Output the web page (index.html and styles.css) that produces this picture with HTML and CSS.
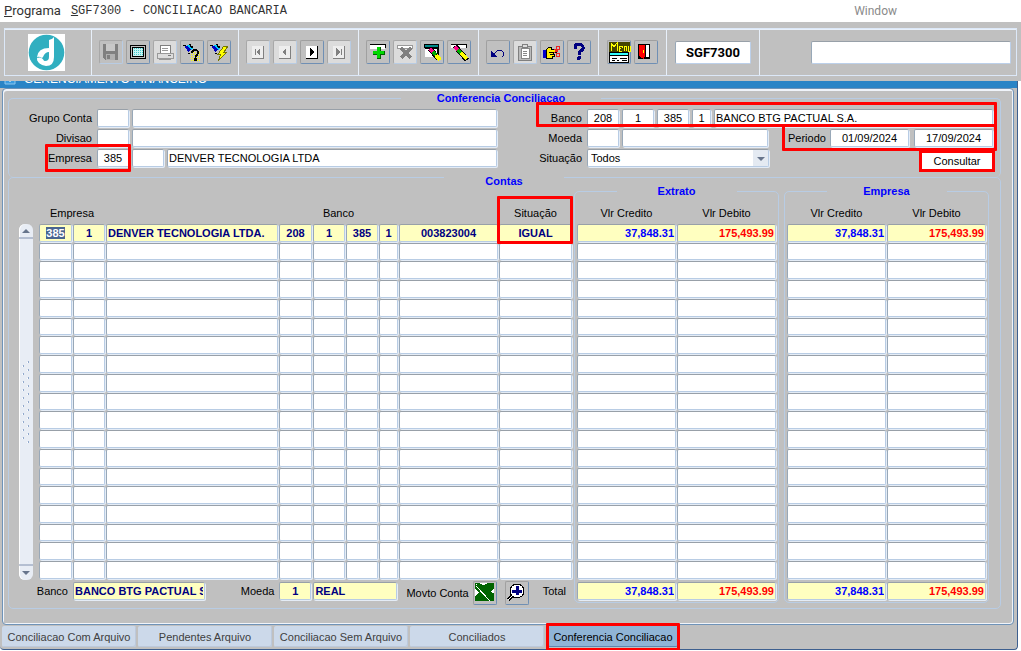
FILE: index.html
```html
<!DOCTYPE html>
<html lang="pt-BR">
<head>
    <meta charset="UTF-8">
    <meta name="viewport" content="width=device-width, initial-scale=1.0">
    <title>SGF7300 - Conciliacao Bancaria</title>
    <link rel="stylesheet" href="styles.css">
</head>
<body>
    <nav class="menubar">
        <a href="#" class="menu-programa"><u>P</u>rograma</a>
        <a href="#" class="menu-titulo"><u>S</u>GF7300 - CONCILIACAO BANCARIA</a>
        <a href="#" class="menu-window">Window</a>
    </nav>

    <header class="toolbar">
        <div class="tools">
            <div class="group group-logo">
                <svg class="logo" viewBox="0 0 37 37">
                    <rect width="37" height="37" fill="#fff"/>
                    <circle cx="18.500" cy="18.500" r="17.800" fill="#31afc0"/>
                    <path d="M21 6Q25 5 26 3V23Q26 32 18 32Q9 31 9 23Q10 14 21 14Z" fill="#fff"/>
                    <path d="M21 18q-4 0-6 5l-1 1q-3-2-5-1l1 3 2-1q3 2 5 2 4 0 4-4z" fill="#31afc0"/>
                    <path d="M9 24q5-2 7 3l-3 3q-4-2-4-6z" fill="#fff"/>
                </svg>
            </div>
            <div class="group">
                <button class="tool off" type="button" aria-label="Salvar">
                    <svg viewBox="0 0 24 24"><path d="M4 4h15v16H6l-2-2z" fill="#808080"/><path d="M7 4h9v7H7z" fill="#c8c8c8"/><path d="M7 14h9v6H7z" fill="#b0b0b0"/><path d="M8 15h3v4H8z" fill="#808080"/></svg>
                </button>
                <button class="tool" type="button" aria-label="Tela">
                    <svg viewBox="0 0 24 24"><path d="M4 5h16v14H4z"/><path d="M5 6h14v12H5z" fill="#c0c0c0"/><path d="M6 7h12v10H6z"/><path d="M7 8h10v8H7z" fill="#c8f4f4"/><path d="M8 8v8m2-8v8m2-8v8m2-8v8m2-8v8" stroke="#4cc" stroke-dasharray="1 1"/></svg>
                </button>
                <button class="tool off pale" type="button" aria-label="Imprimir">
                    <svg viewBox="0 0 24 24"><path d="M7 5h10v8H7z" fill="#fff" stroke="#808080"/><path d="M9 8h6m-6 2h6" stroke="#999"/><path d="M4 13h16v5H4z" fill="#ddd" stroke="#999"/><path d="M6 18h12v2H6z" fill="#999"/><path d="M15 15h3" stroke="#777"/></svg>
                </button>
                <button class="tool" type="button" aria-label="Entrar consulta">
                    <svg viewBox="0 0 24 24"><path d="M11 12.500h10m-10 2h10m-10 2h10m-10 2h10m-10 2h10" stroke="#ff0" stroke-dasharray="1 1"/><path d="M4 5l4 7 5-5z" fill="#0000c0"/><path d="M3 5h3m2 8h2" stroke="#000"/><path d="M7 5h3l3 3-2 2z" fill="#0cf"/><path d="M9 4h2v2h2v2h-2z" fill="#000"/><path d="M12 13q0-3 3-3t3 3q0 2-3 4" fill="none" stroke="#000" stroke-width="2"/><path d="M14 18h3v3h-3z"/></svg>
                </button>
                <button class="tool" type="button" aria-label="Executar consulta">
                    <svg viewBox="0 0 24 24"><path d="M4 5l4 7 5-5z" fill="#0000c0"/><path d="M3 5h3m2 8h2" stroke="#000"/><path d="M7 5h3l3 3-2 2z" fill="#0cf"/><path d="M9 4h2v2h2v2h-2z"/><path d="M17 6h4l-4 6h3l-9 9 3-7h-3z" fill="#ff0" stroke="#770"/></svg>
                </button>
            </div>
            <div class="group">
                <button class="tool off pale" type="button" aria-label="Primeiro">
                    <svg viewBox="0 0 24 24"><path d="M6 6h11v12H6z" fill="#eee"/><path d="M17 6v12H6" fill="none" stroke="#808080"/><path d="M9 9v6" stroke="#808080"/><path d="M14 8v8l-4-4z" fill="#808080"/></svg>
                </button>
                <button class="tool off pale" type="button" aria-label="Anterior">
                    <svg viewBox="0 0 24 24"><path d="M6 6h11v12H6z" fill="#eee"/><path d="M17 6v12H6" fill="none" stroke="#808080"/><path d="M13 8v8l-4-4z" fill="#808080"/></svg>
                </button>
                <button class="tool" type="button" aria-label="Proximo">
                    <svg viewBox="0 0 24 24"><path d="M6 6h11v12H6z" fill="#fff"/><path d="M17 6v12H6" fill="none" stroke="#000"/><path d="M10 8v8l4-4z"/></svg>
                </button>
                <button class="tool off pale" type="button" aria-label="Ultimo">
                    <svg viewBox="0 0 24 24"><path d="M6 6h11v12H6z" fill="#eee"/><path d="M17 6v12H6" fill="none" stroke="#808080"/><path d="M14 9v6" stroke="#808080"/><path d="M9 8v8l4-4z" fill="#808080"/></svg>
                </button>
            </div>
            <div class="group">
                <button class="tool" type="button" aria-label="Inserir">
                    <svg viewBox="0 0 24 24"><path d="M4 5h15v4H4z" fill="#fff"/><path d="M4 4h16v1H4zM19 5h1v3h-1z"/><path d="M11 7h4v4h4v4h-4v4h-4v-4H7v-4h4z" fill="#006000"/><path d="M11 7h3v4h4v3h-4v4h-3v-4H7v-3h4z" fill="#00d800"/></svg>
                </button>
                <button class="tool off pale" type="button" aria-label="Remover">
                    <svg viewBox="0 0 24 24"><path d="M4 5h15v3H4z" fill="#fff" stroke="#999"/><path d="M8 8l10 10m0-10l-10 10" stroke="#808080" stroke-width="4"/></svg>
                </button>
                <button class="tool" type="button" aria-label="Limpar tela">
                    <svg viewBox="0 0 24 24"><path d="M4 4h15v4H4zM5 8h14v9H5z"/><path d="M5 5h13v2H5z" fill="#088"/><path d="M5 9h12v8H5z" fill="#fff"/><path d="M10 9l9 10" stroke="#000" stroke-width="5"/><path d="M10 9l3 3" stroke="#f08" stroke-width="4"/><path d="M13 12l3 3" stroke="#0a0" stroke-width="4"/><path d="M16 15l4 5" stroke="#ff0" stroke-width="4"/></svg>
                </button>
                <button class="tool" type="button" aria-label="Limpar registro">
                    <svg viewBox="0 0 24 24"><path d="M4 5h15v3H4z" fill="#fff"/><path d="M4 4h16v1H4zM19 5h1v3h-1z"/><path d="M8 6l12 14" stroke="#000" stroke-width="5"/><path d="M8 7l4 4" stroke="#f08" stroke-width="3"/><path d="M11 10l3 3" stroke="#0a0" stroke-width="3"/><path d="M14 13l6 6" stroke="#ff0" stroke-width="3"/></svg>
                </button>
            </div>
            <div class="group">
                <button class="tool" type="button" aria-label="Desfazer">
                    <svg viewBox="0 0 24 24"><path d="M7 15l4-4q4-2 6 1t-1 5" fill="none" stroke="#000080"/><path d="M5 11v6h7z" fill="#000080"/></svg>
                </button>
                <button class="tool off pale" type="button" aria-label="Area de transferencia">
                    <svg viewBox="0 0 24 24"><path d="M5 6h13v14H5z" fill="#bbb" stroke="#808080"/><path d="M8 8h8v10H8z" fill="#fff" stroke="#888"/><path d="M9 4h5v3H9z" fill="#ddd" stroke="#808080"/><path d="M10 11h4m-4 2h4m-4 2h4" stroke="#888"/></svg>
                </button>
                <button class="tool" type="button" aria-label="Recortar">
                    <svg viewBox="0 0 24 24"><path d="M3 10h3v8H3z" fill="#00c"/><path d="M6 10l3-3h2v2h5v3h-3v2h1v2h-2v2H6z" fill="#fe0" stroke="#000"/><path d="M9 12h5m-4 2h4" stroke="#000"/><path d="M14 9l4 3m-4 1l4-3" stroke="#e22"/><circle cx="18" cy="8" r="2" fill="none" stroke="#e22"/><circle cx="18" cy="15" r="2" fill="none" stroke="#e22"/></svg>
                </button>
                <button class="tool" type="button" aria-label="Ajuda">
                    <svg viewBox="0 0 24 24"><path d="M8 9V6q1-2 4-2t4 3-4 5v3" fill="none" stroke="#000080" stroke-width="3"/><circle cx="12" cy="18" r="2" fill="#000080"/></svg>
                </button>
            </div>
            <div class="group group-menu">
                <button class="tool" type="button" aria-label="Menu">
                    <svg viewBox="0 0 24 24"><path d="M2 2h21v10H2z" fill="#440"/><path d="M4 11V3l3 4 3-4v8M14 8h-2v3h3M12 8V6h3v2M17 11V6h2v5M21 6v5h2V6" fill="none" stroke="#ff0"/><path d="M2 12h20v11H2z"/><path d="M3 13h18v2H3z" fill="#3ff"/><path d="M3 16h18v6H3z" fill="#fff"/><path d="M5 18h5m3 0h7M5 20h3m2 0h2m3 0h5" stroke="#000"/></svg>
                </button>
                <button class="tool" type="button" aria-label="Sair">
                    <svg viewBox="0 0 24 24"><path d="M4 4h12v15H4z"/><path d="M12 5h3v12h-3z" fill="#fff"/><path d="M5 5h6v11l-1 3-5-3z" fill="#f00"/><path d="M9 10v3" stroke="#ff0"/></svg>
                </button>
            </div>
            <div class="group group-code">
                <input class="code" type="text" value="SGF7300" aria-label="Programa">
            </div>
            <div class="group group-user">
                <input class="code user" type="text" aria-label="Usuario">
            </div>
        </div>
    </header>

    <main class="window">
        <div class="titlebar">
            <svg class="title-icon" viewBox="0 0 12 12"><path d="M1 0h10v11H1z" fill="#3a9be0" stroke="#8cc6ee"/><path d="M3 5h3v4m0-6h3v4" fill="none" stroke="#fff"/></svg>
            <span>GERENCIAMENTO FINANCEIRO</span>
        </div>

        <div class="panel">
            <form>
                <fieldset class="frame filters">
                    <legend>Conferencia Conciliacao</legend>
                    <div class="filter-cols">
                        <div class="filter-col">
                            <div class="line">
                                <label for="grupo">Grupo Conta</label>
                                <input class="field w32" id="grupo" type="text">
                                <input class="field grow" type="text" aria-label="Nome do grupo">
                            </div>
                            <div class="line">
                                <label for="divisao">Divisao</label>
                                <input class="field w32" id="divisao" type="text">
                                <input class="field grow" type="text" aria-label="Nome da divisao">
                            </div>
                            <div class="line">
                                <div class="mark mark-empresa">
                                    <label for="empresa">Empresa</label>
                                    <input class="field w32 center" id="empresa" type="text" value="385">
                                </div>
                                <input class="field w32" type="text" aria-label="Filial">
                                <input class="field grow" type="text" value="DENVER TECNOLOGIA LTDA" aria-label="Nome da empresa">
                            </div>
                        </div>
                        <div class="filter-col filter-right">
                            <div class="line mark mark-banco">
                                <label for="banco">Banco</label>
                                <input class="field w32 center" id="banco" type="text" value="208">
                                <input class="field w32 center" type="text" value="1" aria-label="Filial do banco">
                                <input class="field w32 center" type="text" value="385" aria-label="Agencia">
                                <input class="field w19 center" type="text" value="1" aria-label="Digito">
                                <input class="field grow" type="text" value="BANCO BTG PACTUAL S.A." aria-label="Nome do banco">
                            </div>
                            <div class="line">
                                <label for="moeda">Moeda</label>
                                <input class="field w32" id="moeda" type="text">
                                <input class="field grow" type="text" aria-label="Nome da moeda">
                                <div class="mark mark-periodo">
                                    <label for="periodo">Periodo</label>
                                    <input class="field center" id="periodo" type="text" value="01/09/2024">
                                    <input class="field center" type="text" value="17/09/2024" aria-label="Periodo final">
                                </div>
                            </div>
                            <div class="line">
                                <label for="situacao">Situação</label>
                                <div class="select-wrap">
                                    <select class="field" id="situacao">
                                        <option>Todos</option>
                                    </select>
                                </div>
                                <div class="actions">
                                    <button class="consultar" type="button">Consultar</button>
                                </div>
                            </div>
                        </div>
                    </div>
                </fieldset>

                <fieldset class="frame contas">
                    <legend>Contas</legend>
                    <div class="contas-cols">
                        <div class="scrollbar">
                            <svg class="arrow" viewBox="0 0 14 16"><path d="M3 9l4-4 4 4z" fill="#67758c"/><path d="M0 14h14" stroke="#8090ae"/></svg>
                            <svg class="grip" viewBox="0 0 14 84">
                                <defs>
                                    <pattern id="dots" width="14" height="8" patternUnits="userSpaceOnUse">
                                        <path d="M8 2h1v1H8zM3 6h1v1H3z" fill="#fff"/>
                                        <path d="M9 1h1v1H9zM8 3h1V2h1v1zM4 5h1v1H4zM3 7h1V6h1v1z" fill="#90a8cc"/>
                                    </pattern>
                                </defs>
                                <rect width="14" height="84" fill="url(#dots)"/>
                            </svg>
                            <svg class="arrow" viewBox="0 0 14 16"><path d="M3 7h8l-4 4z" fill="#67758c"/><path d="M0 1h14" stroke="#8090ae"/></svg>
                        </div>

                        <div class="main-col">
                            <table>
                                <colgroup>
                                    <col class="c33"><col class="c32"><col>
                                    <col class="c33"><col class="c32"><col class="c32"><col class="c19">
                                    <col class="c99"><col class="c73">
                                </colgroup>
                                <thead>
                                    <tr>
                                        <th colspan="2">Empresa</th>
                                        <th></th>
                                        <th colspan="4">Banco</th>
                                        <th></th>
                                        <th>Situação</th>
                                    </tr>
                                </thead>
                                <tbody>
                                    <tr class="current">
                                        <td><span class="selected">385</span></td>
                                        <td>1</td>
                                        <td class="left">DENVER TECNOLOGIA LTDA.</td>
                                        <td>208</td>
                                        <td>1</td>
                                        <td>385</td>
                                        <td>1</td>
                                        <td>003823004</td>
                                        <td class="mark mark-situacao">IGUAL</td>
                                    </tr>
                                </tbody>
                            </table>
                            <div class="footer-row">
                                <label for="rod-banco">Banco</label>
                                <input class="field yellow rod-banco" id="rod-banco" type="text" value="BANCO BTG PACTUAL S.A.">
                                <label class="rod-moeda" for="rod-moeda">Moeda</label>
                                <input class="field yellow w32 center" id="rod-moeda" type="text" value="1">
                                <input class="field yellow rod-nome" type="text" value="REAL" aria-label="Nome da moeda">
                                <span class="movto">Movto Conta</span>
                                <button class="tool" type="button" aria-label="Exportar planilha">
                                    <svg viewBox="0 0 24 24"><path d="M2 2h19v18H2z" fill="#006400"/><path d="M7 2h7v1h-2v1H9V3H7zM2 8l4 3-4 4zM21 7l-4 4 4 1zM3 3h1v1H3z" fill="#fff"/><path d="M3 5l14 15" stroke="#fff"/></svg>
                                </button>
                                <button class="tool zoom" type="button" aria-label="Detalhar">
                                    <svg viewBox="0 0 24 24"><circle cx="12" cy="10" r="7" fill="#fff" stroke="#000"/><path d="M12 5v9M7 10h10" stroke="#000080" stroke-width="3"/><path d="M7 15l-4 4" stroke="#000" stroke-width="3"/><path d="M7 15l-4 4" stroke="#fff"/></svg>
                                </button>
                                <span class="total">Total</span>
                            </div>
                        </div>

                        <fieldset class="frame money">
                            <legend>Extrato</legend>
                            <table>
                                <thead>
                                    <tr><th>Vlr Credito</th><th>Vlr Debito</th></tr>
                                </thead>
                                <tbody>
                                    <tr class="current"><td class="credito">37,848.31</td><td class="debito">175,493.99</td></tr>
                                </tbody>
                            </table>
                            <div class="totals">
                                <input class="field yellow credito" type="text" value="37,848.31" aria-label="Total credito extrato">
                                <input class="field yellow debito" type="text" value="175,493.99" aria-label="Total debito extrato">
                            </div>
                        </fieldset>

                        <fieldset class="frame money">
                            <legend>Empresa</legend>
                            <table>
                                <thead>
                                    <tr><th>Vlr Credito</th><th>Vlr Debito</th></tr>
                                </thead>
                                <tbody>
                                    <tr class="current"><td class="credito">37,848.31</td><td class="debito">175,493.99</td></tr>
                                </tbody>
                            </table>
                            <div class="totals">
                                <input class="field yellow credito" type="text" value="37,848.31" aria-label="Total credito empresa">
                                <input class="field yellow debito" type="text" value="175,493.99" aria-label="Total debito empresa">
                            </div>
                        </fieldset>
                    </div>
                </fieldset>
            </form>
        </div>

        <div class="tabs">
            <button type="button">Conciliacao Com Arquivo</button>
            <button type="button">Pendentes Arquivo</button>
            <button type="button">Conciliacao Sem Arquivo</button>
            <button type="button">Conciliados</button>
            <button type="button" class="active mark mark-tab">Conferencia Conciliacao</button>
        </div>
    </main>
    <script src="script.js"></script>
</body>
</html>
```

FILE: styles.css
```css
* {
    box-sizing: border-box;
}

body {
    margin: 0;
    background: #fff;
    font-family: "Liberation Sans", Arial, sans-serif;
    font-size: 11px;
    line-height: 14px;
    color: #000;
}

input, select, button {
    font: inherit;
    color: inherit;
    margin: 0;
}

svg {
    display: block;
}

/* Menu */
.menubar {
    display: flex;
    align-items: center;
    height: 22px;
    padding: 0 124px 0 4px;
    font-size: 12px;
}

.menubar a {
    color: #333;
    text-decoration: none;
}

.menubar .menu-programa {
    font-family: Roboto, sans-serif;
    font-size: 13px;
}

.menubar .menu-titulo {
    margin-left: 10px;
    font-family: "Liberation Mono", monospace;
}

.menubar .menu-window {
    margin-left: auto;
    font-family: Roboto, sans-serif;
    color: #8a8a8a;
}

/* Barra de ferramentas */
.toolbar {
    height: 59px;
    padding: 6px 4px 5px 4px;
    background: #c0c0c0;
}

.tools {
    display: flex;
    height: 48px;
    border: 1px solid #dce8f8;
    box-shadow: inset 0 1px #e8f0fa;
}

.group {
    display: flex;
    align-items: center;
    gap: 3px;
    padding: 0 7px;
    border-right: 1px solid #e8f0fa;
}

.group-logo {
    width: 87px;
    padding-left: 23px;
}

.logo {
    width: 37px;
    height: 37px;
}

.tool {
    flex: none;
    width: 24px;
    height: 24px;
    padding: 0;
    background: #c0c0c0;
    border: 1px solid;
    border-color: #a0a0a0 #6f8fb4 #6f8fb4 #a0a0a0;
    border-radius: 2px;
}

.tool svg {
    width: 24px;
    height: 24px;
    margin: -1px;
    shape-rendering: crispEdges;
}

.tool.off {
    border-color: #a8a8a8 #b8cce4 #b8cce4 #a8a8a8;
}

.tool.pale {
    background: #dcdcdc;
}

.group-menu {
    padding: 0 8px;
}

.group-code {
    width: 93px;
    padding: 0 8px;
}

.group-user {
    flex: 1;
    justify-content: flex-end;
    padding-right: 5px;
    border-right: 0;
}

.code {
    width: 76px;
    height: 23px;
    padding: 0;
    border: 1px solid;
    border-color: #98a0a8 #bcd0ea #bcd0ea #98a8b8;
    border-radius: 2px;
    background: #fff;
    font-family: Roboto, sans-serif;
    font-size: 13px;
    font-weight: bold;
    text-align: center;
}

.code.user {
    width: 200px;
}

/* Janela */
.window {
    margin-right: 3px;
    padding-bottom: 2px;
    background: #c0c0c0;
    border-right: 1px solid #3d5f8f;
    border-bottom: 1px solid #3d5f8f;
    border-radius: 0 0 4px 4px;
}

.titlebar {
    display: flex;
    align-items: flex-end;
    gap: 8px;
    height: 7px;
    padding: 0 0 3px 4px;
    overflow: hidden;
    background: #2a84c6;
    color: #fff;
    font-size: 12px;
    line-height: 12px;
}

.title-icon {
    width: 12px;
    height: 12px;
}

.panel {
    margin: 0 3px 0 2px;
    padding: 2px 12px 15px 5px;
    border: 1px solid #6f93b8;
    border-radius: 4px;
    box-shadow: inset 1px 2px #f0f4fa, inset -1px -1px #f0f4fa;
}

.frame {
    min-width: 0;
    margin: 0;
    padding: 0;
    border: 1px solid #b8cce4;
    border-radius: 5px;
}

.frame > legend {
    width: 120px;
    height: 14px;
    margin: 0 auto;
    padding: 0;
    color: #00f;
    font-weight: bold;
    text-align: center;
}

.filters {
    height: 86px;
    padding: 4px 7px 0 0;
    border-bottom: 0;
}

.filters > legend {
    width: 200px;
}

.filter-cols {
    display: grid;
    grid-template-columns: 488fr 496fr;
}

.filter-col {
    display: flex;
    flex-direction: column;
    gap: 2px;
}

.line {
    display: flex;
    align-items: center;
    gap: 3px;
    height: 18px;
}

.line label {
    width: 85px;
    padding-right: 2px;
    text-align: right;
    flex: none;
}

.filter-right {
    padding-left: 2px;
}

.field {
    height: 18px;
    min-width: 0;
    padding: 0 1px;
    background: #fff;
    border: 1px solid;
    border-color: #98a0a8 #b8cce4 #b8cce4 #98a8b8;
    border-radius: 2px;
    box-shadow: 1px 1px #e4ecf6;
}

.w32 {
    width: 32px;
}

.w19 {
    width: 19px;
}

.line .w32, .line .w19, .footer-row .w32 {
    flex: none;
}

.grow {
    flex: 1;
}

.center {
    text-align: center;
}

.yellow {
    background: #ffffc0;
    color: #000080;
    font-weight: bold;
}

.select-wrap {
    flex: none;
    width: 182px;
    position: relative;
}

.select-wrap select {
    width: 100%;
    display: block;
    appearance: none;
    padding-left: 3px;
    background: linear-gradient(#e4eaf2, #e4eaf2) right / 15px 100% no-repeat #fff;
}

.select-wrap::after {
    content: "";
    position: absolute;
    top: 1px;
    right: 1px;
    width: 14px;
    height: 16px;
    background: #67758c;
    clip-path: polygon(3px 7px, 11px 7px, 7px 11px);
    pointer-events: none;
}

.actions {
    display: flex;
    flex: 1;
    align-self: flex-start;
    justify-content: flex-end;
    padding-top: 1px;
}

.consultar {
    flex: none;
    width: 76px;
    height: 22px;
    margin-right: -2px;
    padding: 0;
    background: #fff;
    border: 3px solid #f00;
}

/* Destaques em vermelho */
.mark {
    position: relative;
}

.mark::after {
    content: "";
    position: absolute;
    z-index: 1;
    border: 3px solid #f00;
    border-radius: 1px;
    pointer-events: none;
}

.mark-empresa {
    display: flex;
    align-items: center;
    gap: 3px;
}

.mark-empresa::after {
    inset: -5px -2px -5px 36px;
}

.mark-banco::after {
    inset: -7px -4px 0 37px;
}

.mark-periodo {
    display: flex;
    flex: none;
    align-items: center;
    gap: 5px;
    margin-left: 17px;
}

.mark-periodo label {
    width: 37px;
    padding: 0;
}

.mark-periodo .field {
    width: 79px;
}

.mark-periodo::after {
    inset: -5px -4px -4px -6px;
}

.mark-situacao::after {
    inset: -29px -2px -3px -3px;
}

.mark-tab::after {
    inset: -3px -2px -4px -2px;
}

/* Contas */
.contas {
    margin-top: -11px;
    padding: 0 11px 5px 10px;
}

.contas > legend {
    height: 22px;
    padding-top: 8px;
}

.contas-cols {
    display: flex;
    margin-top: -4px;
}

.scrollbar {
    display: flex;
    flex: none;
    flex-direction: column;
    justify-content: space-between;
    width: 14px;
    height: 356px;
    margin: 40px 5px 0 0;
    background: #e8edf5;
    border-radius: 6px;
    box-shadow: inset 1px 0 #fff;
}

.arrow {
    height: 16px;
}

.grip {
    height: 84px;
}

.main-col {
    flex: 1;
    min-width: 0;
    margin-right: 1px;
    padding-top: 14px;
}

table {
    width: 100%;
    height: 382px;
    table-layout: fixed;
    border-spacing: 1px;
    margin: 0;
}

th {
    height: 24px;
    padding: 4px 0 0;
    font-weight: normal;
}

td {
    height: 17px;
    padding: 0 1px;
    background: #fff;
    border: 1px solid;
    border-color: #98a0a8 #b8cce4 #b8cce4 #98a8b8;
    border-radius: 2px;
    box-shadow: 1px 1px #e4ecf6;
    color: #000080;
    font-weight: bold;
    text-align: center;
    white-space: nowrap;
}

.current td {
    background: #ffffc0;
}

td.left {
    text-align: left;
}

.selected {
    background: #4a6590;
    color: #fff;
}

.c19 { width: 19px; }
.c32 { width: 32px; }
.c33 { width: 33px; }
.c73 { width: 73px; }
.c99 { width: 99px; }

.credito, td.credito {
    color: #00f;
    text-align: right;
}

.debito, td.debito {
    color: #f00;
    text-align: right;
}

.footer-row {
    display: flex;
    align-items: center;
    height: 18px;
    margin-top: 2px;
    white-space: nowrap;
}

.footer-row label:first-child {
    width: 35px;
    flex: none;
    text-align: right;
    margin: 0 5px 0 -5px;
}

.rod-banco {
    width: 132px;
}

.rod-moeda {
    flex: 1;
    padding-right: 5px;
    text-align: right;
}

.rod-nome {
    width: 84px;
    margin-left: 2px;
}

.movto {
    margin: 4px 4px 0 9px;
}

.footer-row .tool {
    margin-top: 3px;
}

.footer-row .zoom {
    margin-left: 8px;
}

.total {
    margin: 0 7px 0 14px;
}

.money {
    flex: none;
    width: 205px;
    padding: 0 1px 2px;
}

.money + .money {
    margin-left: 5px;
}

.totals {
    display: flex;
    gap: 1px;
    margin: 2px 1px 0;
}

.totals .field {
    flex: 1;
}

/* Abas */
.tabs {
    display: flex;
    gap: 2px;
    margin-top: 1px;
    padding-left: 2px;
}

.tabs button {
    width: 134px;
    height: 21px;
    padding: 0;
    background: #ccd9ea;
    border: 0;
    border-radius: 2px;
    box-shadow: inset -1px -1px #bcc9dc;
    color: #404040;
}

.tabs .active {
    width: 130px;
    margin-left: 2px;
    background: #90b4d6;
    box-shadow: inset 0 -1px #5f86b0;
    color: #000;
}
```

FILE: script.js
```js
// Completa cada tabela com linhas vazias
const TOTAL_LINHAS = 19;

document.querySelectorAll('tbody').forEach(function (tbody) {
    const colunas = tbody.rows[0].cells.length;
    while (tbody.rows.length < TOTAL_LINHAS) {
        const linha = tbody.insertRow();
        for (let i = 0; i < colunas; i++) {
            linha.insertCell();
        }
    }
});
```
